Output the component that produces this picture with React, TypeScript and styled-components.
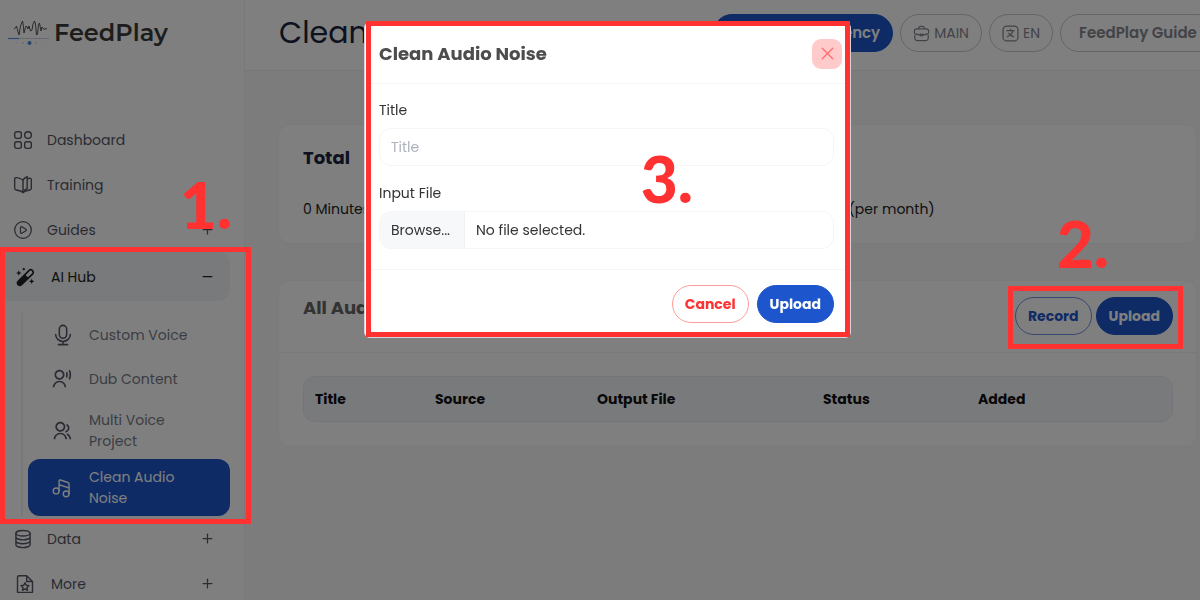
import React from "react";
import styled, { createGlobalStyle, css } from "styled-components";
import { CirclePlay, Minus, Plus, X } from "lucide-react";
import { RiGroupLine, RiUserVoiceLine } from "react-icons/ri";

const RED = "#ff3131";
const BLUE = "#1d56cc";

const GlobalStyle = createGlobalStyle`
  *, *::before, *::after { box-sizing: border-box; }
  html, body { margin: 0; background: #f8f8f8; }
  body { font-family: Poppins, Inter, sans-serif; font-size: 14px; line-height: 20px; color: #222; overflow: hidden; }
  button, input { font: inherit; }
  a { color: inherit; text-decoration: none; }
  h1, h2, p, ul { margin: 0; padding: 0; }
`;

const Shell = styled.div`
  display: flex;
  height: 100vh;
  overflow: hidden;
`;

/* Sidebar */
const Sidebar = styled.aside`
  flex: none;
  width: 245px;
  background: #fff;
  border-right: 1px solid #f1f1f3;
`;
const Brand = styled.a`
  display: flex;
  align-items: center;
  gap: 4px;
  height: 66px;
  padding-left: 8px;
  margin-bottom: 51px;
  font-family: Montserrat, Poppins, Inter, sans-serif;
  font-size: 24px;
  font-weight: 600;
  color: #3a3a3a;
`;
const NavList = styled.ul`
  list-style: none;
`;
const NavLink = styled.a<{ $open?: boolean; $indent?: boolean }>`
  display: flex;
  align-items: center;
  gap: ${(p) => (p.$indent ? 16 : 14)}px;
  height: ${(p) => (p.$open ? 49 : 45)}px;
  margin-right: 14px;
  padding: 0 15px 0 ${(p) => (p.$indent ? 15 : 13)}px;
  border-radius: 0 12px 12px 0;
  color: #545766;
  svg { flex: none; }
  span { flex: 1; }
  ${(p) =>
    p.$open &&
    css`
      background: #f2f4f7;
      color: #222;
    `}
`;
const Group = styled.li`
  position: relative;
`;
const SubList = styled.ul`
  list-style: none;
  margin: 12px 14px 0 21px;
  padding-left: 5px;
  border-left: 2px solid #f0f1f4;
`;
const SubLink = styled.a<{ $active?: boolean }>`
  display: grid;
  grid-template-columns: 20px 104px;
  column-gap: 17px;
  align-items: center;
  min-height: 44px;
  padding-left: 24px;
  border-radius: 12px;
  line-height: 21px;
  color: #777a88;
  svg { color: #545766; }
  ${(p) =>
    p.$active &&
    css`
      min-height: 57px;
      background: ${BLUE};
      color: #fff;
      svg { color: #fff; }
    `}
`;
const TwoLine = styled.li`
  padding: 8px 0 6px;
`;

/* Main column */
const Main = styled.main`
  flex: 1;
  min-width: 0;
`;
const Header = styled.header`
  display: flex;
  align-items: center;
  justify-content: space-between;
  height: 71px;
  padding: 0 0 4px 34px;
  background: #fff;
  border-bottom: 1px solid #ececee;
  overflow: hidden;
`;
const PageTitle = styled.h1`
  font-size: 30px;
  line-height: 40px;
  font-weight: 400;
  color: #1c2540;
`;
const HeaderActions = styled.div`
  display: flex;
  flex: none;
  gap: 7px;
  margin-right: -16px;
`;
const Pill = styled.button<{ $tone: "solid" | "neutral" | "record" | "danger" }>`
  display: inline-flex;
  align-items: center;
  justify-content: center;
  gap: 4px;
  flex: none;
  height: 38px;
  padding: 0 12px;
  border-radius: 19px;
  border: 1px solid ${BLUE};
  background: transparent;
  font-size: 14px;
  font-weight: 700;
  cursor: pointer;
  white-space: nowrap;
  ${(p) => p.$tone === "solid" && css`background: ${BLUE}; color: #fff;`}
  ${(p) => p.$tone === "neutral" && css`border-color: #c9c9cd; color: #85878f;`}
  ${(p) => p.$tone === "record" && css`color: ${BLUE}; border-color: #6f93e0;`}
  ${(p) => p.$tone === "danger" && css`color: ${RED}; border-color: #ff9c9c;`}
`;
const LightPill = styled(Pill)`
  font-weight: 400;
`;
const AgencyPill = styled(Pill)`
  width: 180px;
  font-size: 15px;
  font-weight: 600;
  justify-content: flex-end;
`;
const GuidePill = styled(Pill)`
  width: 156px;
  font-size: 15px;
  font-weight: 600;
`;
const Content = styled.div`
  display: grid;
  gap: 36px;
  padding: 53px 3px 0 33px;
`;
const Card = styled.section`
  background: #fff;
  border: 1px solid #f3f4f8;
  border-radius: 12px;
`;
const Summary = styled(Card)`
  min-height: 120px;
  padding: 21px 24px;
`;
const SummaryTitle = styled.h2`
  font-size: 18px;
  line-height: 24px;
  font-weight: 700;
  color: #1c2540;
`;
const SummaryRow = styled.div`
  display: grid;
  grid-template-columns: 1fr 1fr;
  margin-top: 27px;
  line-height: 24px;
  p + p { padding-left: 111px; }
`;
const CardHead = styled.div`
  display: flex;
  justify-content: space-between;
  align-items: flex-start;
  height: 72px;
  padding: 16px 23px 0 24px;
  border-bottom: 1px solid #f3f3f5;
`;
const CardTitle = styled.h2`
  font-size: 18px;
  line-height: 22px;
  font-weight: 700;
  color: #666;
`;
const Actions = styled.div`
  position: relative;
  display: flex;
  gap: 4px;
`;
const TableWrap = styled.div`
  padding: 23px 23px 24px 24px;
`;
const Table = styled.table`
  width: 100%;
  table-layout: fixed;
  border-collapse: separate;
  border-spacing: 0;
  background: #f3f4f9;
  border: 1px solid #e9ebf1;
  border-radius: 12px;
  th {
    height: 44px;
    padding: 0 0 0 11px;
    text-align: left;
    font-weight: 700;
    color: #111;
  }
`;

/* Dialog */
const Backdrop = styled.div`
  position: fixed;
  inset: 0;
  z-index: 10;
  display: flex;
  justify-content: center;
  align-items: flex-start;
  padding: 22px 0 0 15px;
  background: rgba(0, 0, 0, 0.5);
`;
const Dialog = styled.form`
  position: relative;
  width: 487px;
  background: #fff;
  border-radius: 6px;
  border: 1px solid #d5d5d5;
`;
const DialogHead = styled.div`
  display: flex;
  align-items: center;
  justify-content: space-between;
  height: 61px;
  padding: 1px 8px 0 14px;
  border-bottom: 1px solid #f5f5f6;
`;
const DialogTitle = styled.h2`
  font-size: 18px;
  line-height: 24px;
  font-weight: 700;
  color: #4d4d4d;
`;
const Close = styled.button`
  display: grid;
  place-items: center;
  width: 30px;
  height: 30px;
  padding: 0;
  border: 0;
  border-radius: 9px;
  background: #ffcaca;
  color: #ff6b6b;
`;
const DialogBody = styled.div`
  padding: 16px 16px 20px 14px;
  border-bottom: 1px solid #f5f5f6;
`;
const Label = styled.label`
  display: block;
  line-height: 20px;
  margin-bottom: 8px;
  color: #333;
`;
const fieldBox = css`
  width: 100%;
  height: 38px;
  border: 1px solid #f5f5f7;
  border-radius: 12px;
`;
const TextInput = styled.input`
  ${fieldBox}
  display: block;
  margin-bottom: 17px;
  padding: 0 11px;
  background: #fff;
  &::placeholder { color: #adb2be; opacity: 1; }
`;
const FileBox = styled.div`
  ${fieldBox}
  position: relative;
  display: flex;
  align-items: stretch;
  overflow: hidden;
  line-height: 36px;
  color: #333;
  input { position: absolute; inset: 0; width: 100%; opacity: 0; }
`;
const Browse = styled.span`
  width: 85px;
  padding-left: 11px;
  background: #f7f8fa;
  border-right: 1px solid #f0f1f3;
`;
const FileName = styled.span`
  padding-left: 11px;
`;
const DialogFoot = styled.div`
  display: flex;
  justify-content: flex-end;
  gap: 8px;
  padding: 15px 16px 14px;
`;

/* Step call-outs drawn over the page */
const Outline = styled.div<{ $inset: string }>`
  position: absolute;
  inset: ${(p) => p.$inset};
  z-index: 20;
  border: 5px solid ${RED};
  pointer-events: none;
`;
const Step = styled.strong<{ $top: number; $right: number }>`
  position: absolute;
  top: ${(p) => p.$top}px;
  right: ${(p) => p.$right}px;
  z-index: 20;
  font: 900 64px/64px Lato, sans-serif;
  color: ${RED};
  pointer-events: none;
`;

const Svg = ({ size = 20, children }: { size?: number; children: React.ReactNode }) => (
  <svg width={size} height={size} viewBox="0 0 24 24" fill="none" stroke="currentColor" strokeWidth="1.7" strokeLinecap="round" strokeLinejoin="round" aria-hidden="true">
    {children}
  </svg>
);
const LogoMark = () => (
  <svg width="42" height="28" viewBox="0 0 42 28" fill="none" aria-hidden="true">
    <path d="M6 10l1.500-1 1-2 1 4 1.500 5 1.500-9 2-5 .5 2 1 10 1.500-6 1-1 1.500 3 1-3 1.500 5 1.500-1 1-6 1.500-3 1 3 1 11 1-1 1-9 1-2 1.500 8 1-4 1 1 1 1.500 2-1 1 .5" stroke="#444" strokeWidth="0.900" strokeLinejoin="round" />
    <path d="M0 19.500h11" stroke="#5b92dc" strokeWidth="1.200" />
    <path d="M11 19.500h30" stroke="#b7c5da" strokeWidth="0.700" />
    <circle cx="21.500" cy="24" r="2" fill="#4a88d8" />
    <circle cx="15" cy="24" r="0.700" fill="#a7bcda" />
    <circle cx="28" cy="24" r="0.700" fill="#a7bcda" />
    <circle cx="9" cy="24" r="0.500" fill="#b7c5da" />
    <circle cx="35" cy="24" r="0.500" fill="#b7c5da" />
  </svg>
);
const GridIcon = () => (
  <Svg>
    <rect x="2" y="2" width="8" height="8" rx="2.500" />
    <circle cx="18" cy="6" r="4" />
    <rect x="2" y="14" width="8" height="8" rx="2.500" />
    <rect x="14" y="14" width="8" height="8" rx="2.500" />
  </Svg>
);
const BookIcon = () => (
  <Svg>
    <path d="M12 21c-2-2-5-2.500-8-3-1.200-.2-2-.8-2-2V5c0-1.500 1-2 2.500-1.800C7.500 3.600 10 4.500 12 6z" />
    <path d="M12 6c1-1.500 2.500-2.800 5-4v14c-2 1-4 2.500-5 5M17 4.500c4-1 5-.5 5 1V16c0 1.200-.8 1.800-2 2-3 .5-6 1-8 3" />
  </Svg>
);
const WandIcon = () => (
  <svg width="20" height="20" viewBox="0 0 24 24" aria-hidden="true">
    <path d="M3.500 17.500L17 4a3 3 0 0 1 4.200 4.200L7.500 21.500a2.900 2.900 0 0 1-4-4z" fill="none" stroke="currentColor" strokeWidth="2" />
    <path d="M3.500 17.500l8.500-8.500 4 4-8.500 8.500a2.900 2.900 0 0 1-4-4z" fill="currentColor" />
    <path d="M4.500 4l1 2.200 2.200 1-2.200 1-1 2.200-1-2.200-2.200-1 2.200-1zM20 14l1 2.200 2.200 1-2.200 1-1 2.200-1-2.200-2.200-1 2.200-1z" fill="currentColor" />
    <circle cx="10.500" cy="2.500" r="1.400" fill="currentColor" />
  </svg>
);
const MicIcon = () => (
  <Svg size={22}>
    <rect x="8" y="1.500" width="8" height="14" rx="4" />
    <path d="M4 11.500a8 7.500 0 0 0 16 0M12 19v3.500M7 22.500h10" />
  </Svg>
);
const MusicIcon = () => (
  <Svg>
    <circle cx="5" cy="15.500" r="3.500" />
    <circle cx="17" cy="19" r="3.500" />
    <path d="M8.500 15.500V3.500c0-1 .6-1.400 1.500-1.100l9 3c1 .3 1.500 1 1.500 2V19M8.500 8l12 4" />
  </Svg>
);
const DataIcon = () => (
  <Svg>
    <ellipse cx="12" cy="5" rx="8.500" ry="3.300" />
    <path d="M3.500 5v14c0 1.800 3.800 3.300 8.500 3.300s8.500-1.500 8.500-3.300V5M3.500 9.700c0 1.800 3.800 3.300 8.500 3.300s8.500-1.500 8.500-3.300M3.500 14.400c0 1.800 3.800 3.300 8.500 3.300s8.500-1.500 8.500-3.300" />
  </Svg>
);
const FileStarIcon = () => (
  <Svg>
    <path d="M3 22V4a2 2 0 0 1 2-2h9l7 7v13zM14 2v7h7" />
    <path d="M12 10.500l1.500 3 3.300.4-2.400 2.300.6 3.300-3-1.600-3 1.600.6-3.300-2.400-2.300 3.300-.4z" />
  </Svg>
);
const BriefcaseIcon = () => (
  <Svg size={17}>
    <path d="M8 5V4.500C8 3 9 2 10.500 2h3C15 2 16 3 16 4.500V5" />
    <path d="M5 5.500h14a3 3 0 0 1 3 3v2c0 1-1 2-2 2.300-5 1.500-11 1.500-16 0-1-.3-2-1.300-2-2.300v-2a3 3 0 0 1 3-3z" />
    <path d="M2.500 14.500v4A3.500 3.500 0 0 0 6 22h12a3.500 3.500 0 0 0 3.500-3.500v-4M10.500 12.500v2.500h3v-2.500" />
  </Svg>
);
const LanguageIcon = () => (
  <Svg size={17}>
    <rect x="1.500" y="1.500" width="21" height="21" rx="5" />
    <path d="M7 8h10M12 6v2M15.500 8c-1 4-4 7-8 8.500M9.500 11.500c1.500 2.500 3.500 4 6.500 5" />
  </Svg>
);

const columns: [string, string][] = [
  ["Title", "120px"],
  ["Source", "162px"],
  ["Output File", "226px"],
  ["Status", "155px"],
  ["Added", "auto"],
];

export default function App() {
  return (
    <>
      <GlobalStyle />
      <Shell>
        <Sidebar>
          <Brand href="#home">
            <LogoMark />
            FeedPlay
          </Brand>
          <nav>
            <NavList>
              <li><NavLink href="#dashboard"><GridIcon /><span>Dashboard</span></NavLink></li>
              <li><NavLink href="#training"><BookIcon /><span>Training</span></NavLink></li>
              <Group>
                <NavLink href="#guides"><CirclePlay size={20} strokeWidth={1.5} /><span>Guides</span><Plus size={15} /></NavLink>
                <Step $top={-34} $right={12}>1.</Step>
              </Group>
              <Group>
                <NavLink href="#ai-hub" $open $indent><WandIcon /><span>AI Hub</span><Minus size={15} /></NavLink>
                <SubList>
                  <li><SubLink href="#custom-voice"><MicIcon />Custom Voice</SubLink></li>
                  <li><SubLink href="#dub"><RiUserVoiceLine size={20} />Dub Content</SubLink></li>
                  <TwoLine><SubLink href="#multi"><RiGroupLine size={20} /><span>Multi Voice<br />Project</span></SubLink></TwoLine>
                  <li><SubLink href="#clean" $active><MusicIcon /><span>Clean Audio<br />Noise</span></SubLink></li>
                </SubList>
                <Outline $inset="-5px -7px -8px 0" />
              </Group>
              <li><NavLink href="#data"><DataIcon /><span>Data</span><Plus size={15} /></NavLink></li>
              <li><NavLink href="#more" $indent><FileStarIcon /><span>More</span><Plus size={15} /></NavLink></li>
            </NavList>
          </nav>
        </Sidebar>
        <Main>
          <Header>
            <PageTitle>Clean</PageTitle>
            <HeaderActions>
              <AgencyPill $tone="solid">Agency</AgencyPill>
              <LightPill $tone="neutral"><BriefcaseIcon />MAIN</LightPill>
              <LightPill $tone="neutral"><LanguageIcon />EN</LightPill>
              <GuidePill $tone="neutral">FeedPlay Guide</GuidePill>
            </HeaderActions>
          </Header>
          <Content>
            <Summary>
              <SummaryTitle>Total</SummaryTitle>
              <SummaryRow>
                <p>0 Minutes</p>
                <p>(per month)</p>
              </SummaryRow>
            </Summary>
            <Card>
              <CardHead>
                <CardTitle>All Audio</CardTitle>
                <Actions>
                  <Pill $tone="record">Record</Pill>
                  <Pill $tone="solid">Upload</Pill>
                  <Outline $inset="-11px -10px -14px -7px" />
                  <Step $top={-85} $right={64}>2.</Step>
                </Actions>
              </CardHead>
              <TableWrap>
                <Table>
                  <colgroup>
                    {columns.map(([name, width]) => <col key={name} style={{ width }} />)}
                  </colgroup>
                  <thead>
                    <tr>{columns.map(([name]) => <th key={name} scope="col">{name}</th>)}</tr>
                  </thead>
                </Table>
              </TableWrap>
            </Card>
          </Content>
        </Main>
      </Shell>
      <Backdrop>
        <Dialog role="dialog" aria-modal="true" aria-labelledby="dialog-title" onSubmit={(e) => e.preventDefault()}>
          <DialogHead>
            <DialogTitle id="dialog-title">Clean Audio Noise</DialogTitle>
            <Close type="button" aria-label="Close"><X size={21} strokeWidth={1.5} /></Close>
          </DialogHead>
          <DialogBody>
            <Label htmlFor="title">Title</Label>
            <TextInput id="title" placeholder="Title" />
            <Label htmlFor="file">Input File</Label>
            <FileBox>
              <Browse>Browse...</Browse>
              <FileName>No file selected.</FileName>
              <input id="file" type="file" />
            </FileBox>
          </DialogBody>
          <DialogFoot>
            <Pill type="button" $tone="danger">Cancel</Pill>
            <Pill type="submit" $tone="solid">Upload</Pill>
          </DialogFoot>
          <Outline $inset="-2px 0 0 1px" />
          <Step $top={124} $right={157}>3.</Step>
        </Dialog>
      </Backdrop>
    </>
  );
}
